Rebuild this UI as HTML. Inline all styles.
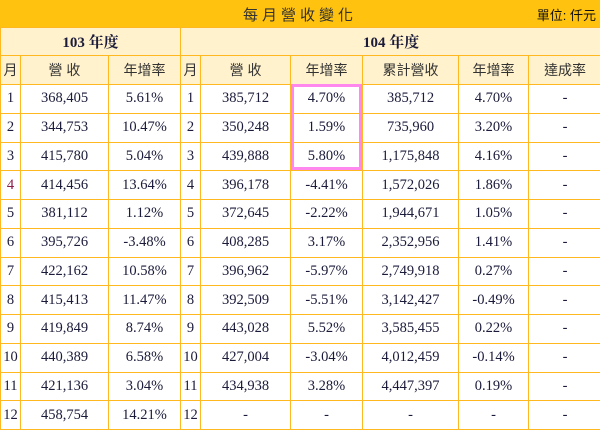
<!DOCTYPE html><html><head><meta charset="utf-8"><style>
body{margin:0;width:600px;height:429px;overflow:hidden;background:#fff;font-family:"Liberation Serif","Noto Serif CJK SC",serif;color:#1a1a3a}
.t{position:absolute;left:0;top:0;width:600px;height:27px;background:#FFC20E;}
.t .a{position:absolute;left:0;width:600px;text-align:center;top:4px;font-size:15px;letter-spacing:4px;font-family:"Liberation Sans","Noto Sans CJK TC",sans-serif;color:#333}
.t .b{position:absolute;right:4px;top:5px;font-size:13px;font-family:"Liberation Sans","Noto Sans CJK TC",sans-serif;color:#111}
table{position:absolute;left:0;top:27px;border-collapse:collapse;table-layout:fixed;width:601px}
td{border:1px solid #FFB820;text-align:center;padding:0;font-size:14.5px;white-space:nowrap;overflow:hidden}
tr{height:28.75px}
tr.h td{background:#FFF2CC;font-size:14px;font-family:"Liberation Sans","Noto Sans CJK TC",sans-serif;color:#333}
tr.y{height:28px}
tr.y td{background:#FFF2CC;font-weight:bold;font-size:15px}
tr.h{height:29px}
.p{position:absolute;left:291px;top:84px;width:71px;height:86px;border:3px solid #FF88EE;box-sizing:border-box}
</style></head><body>
<div class="t"><div class="a">每月營收變化</div><div class="b">單位: 仟元</div></div>
<table>
<colgroup><col style="width:20px"><col style="width:88px"><col style="width:72px"><col style="width:20px"><col style="width:90px"><col style="width:72px"><col style="width:96px"><col style="width:70px"><col style="width:73px"></colgroup>
<tr class="y"><td colspan="3">103 年度</td><td colspan="6">104 年度</td></tr>
<tr class="h"><td>月</td><td>營 收</td><td>年增率</td><td>月</td><td>營 收</td><td>年增率</td><td>累計營收</td><td>年增率</td><td>達成率</td></tr>
<tr><td>1</td><td>368,405</td><td>5.61%</td><td>1</td><td>385,712</td><td>4.70%</td><td>385,712</td><td>4.70%</td><td>-</td></tr>
<tr><td>2</td><td>344,753</td><td>10.47%</td><td>2</td><td>350,248</td><td>1.59%</td><td>735,960</td><td>3.20%</td><td>-</td></tr>
<tr><td>3</td><td>415,780</td><td>5.04%</td><td>3</td><td>439,888</td><td>5.80%</td><td>1,175,848</td><td>4.16%</td><td>-</td></tr>
<tr><td style="color:#8a1a4a">4</td><td>414,456</td><td>13.64%</td><td>4</td><td>396,178</td><td>-4.41%</td><td>1,572,026</td><td>1.86%</td><td>-</td></tr>
<tr><td>5</td><td>381,112</td><td>1.12%</td><td>5</td><td>372,645</td><td>-2.22%</td><td>1,944,671</td><td>1.05%</td><td>-</td></tr>
<tr><td>6</td><td>395,726</td><td>-3.48%</td><td>6</td><td>408,285</td><td>3.17%</td><td>2,352,956</td><td>1.41%</td><td>-</td></tr>
<tr><td>7</td><td>422,162</td><td>10.58%</td><td>7</td><td>396,962</td><td>-5.97%</td><td>2,749,918</td><td>0.27%</td><td>-</td></tr>
<tr><td>8</td><td>415,413</td><td>11.47%</td><td>8</td><td>392,509</td><td>-5.51%</td><td>3,142,427</td><td>-0.49%</td><td>-</td></tr>
<tr><td>9</td><td>419,849</td><td>8.74%</td><td>9</td><td>443,028</td><td>5.52%</td><td>3,585,455</td><td>0.22%</td><td>-</td></tr>
<tr><td>10</td><td>440,389</td><td>6.58%</td><td>10</td><td>427,004</td><td>-3.04%</td><td>4,012,459</td><td>-0.14%</td><td>-</td></tr>
<tr><td>11</td><td>421,136</td><td>3.04%</td><td>11</td><td>434,938</td><td>3.28%</td><td>4,447,397</td><td>0.19%</td><td>-</td></tr>
<tr><td>12</td><td>458,754</td><td>14.21%</td><td>12</td><td>-</td><td>-</td><td>-</td><td>-</td><td>-</td></tr>
</table>
<div class="p"></div>
</body></html>
